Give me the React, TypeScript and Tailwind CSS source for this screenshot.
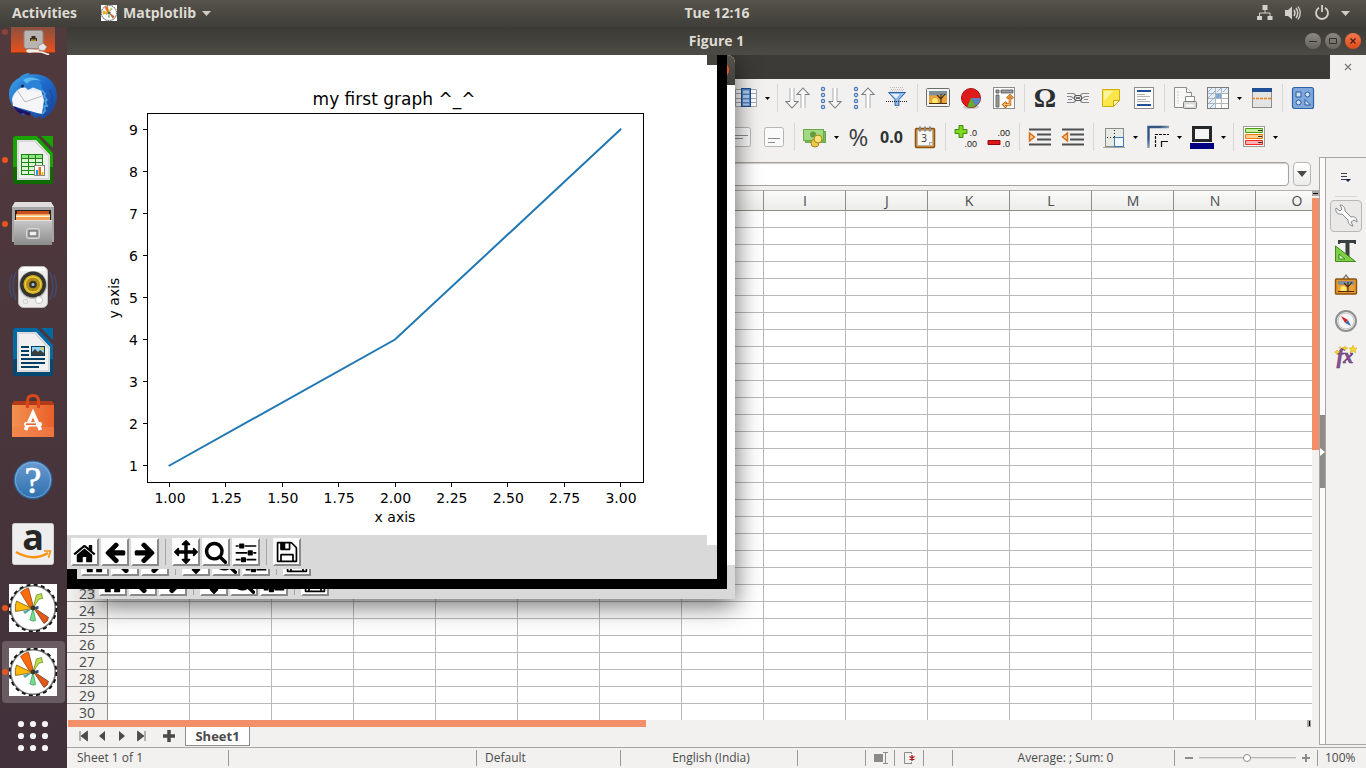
import type { ReactNode } from "react";

type IconProps = { w?: number; h?: number; children: ReactNode };

function Icon({ w = 24, h = 24, children }: IconProps) {
  return (
    <svg width={w} height={h} viewBox={`0 0 ${w} ${h}`} fill="none" aria-hidden="true" className="shrink-0 overflow-visible">
      {children}
    </svg>
  );
}

/* ---------- Dock icons ---------- */

function MatplotlibLogo({ size = 48 }: { size?: number }) {
  return (
    <svg width={size} height={size} viewBox="0 0 48 48" fill="none" aria-hidden="true">
      <rect width="48" height="48" fill="#fff" />
      <circle cx="24" cy="24" r="22.3" stroke="#777" strokeWidth="1.6" />
      <circle cx="24" cy="24" r="23.4" stroke="#111" strokeWidth="1.8" strokeDasharray="4 3.350" />
      <path d="M25 25 21 24 11.500 8.500Q15 5 19.500 4Z" fill="#ff6a0a" stroke="#8a4a1a" strokeWidth=".8" />
      <path d="M24 24 27.500 11 32.500 9.500 33.500 14.500 30 15Z" fill="#bfe04a" stroke="#6c8a2a" strokeWidth=".8" />
      <path d="M24 25 7.500 17Q5.500 22 6.500 27.500L21 25Z" fill="#ffb90a" stroke="#8a6a1a" strokeWidth=".9" />
      <path d="M24 24 14 27.500 16 30Z" fill="#4aa8a0" />
      <path d="M24 24 21 36Q24 38 26.500 36.500Z" fill="#6fe08c" stroke="#4a9a6a" strokeWidth=".8" />
      <path d="M24 23 39.500 33.500Q39 37.500 35 39.500Z" fill="#e0581a" stroke="#7a3a1a" strokeWidth=".8" />
      <path d="M22 23.500 29.500 22 29.500 25 22 25Z" fill="#2c4a8c" />
      <circle cx="24" cy="24" r="2.400" fill="#3a3a2a" />
    </svg>
  );
}

function DiskIcon() {
  return (
    <Icon w={48} h={28}>
      <defs>
        <linearGradient id="dk" x1="0" y1="0" x2="0" y2="1">
          <stop offset="0" stopColor="#8a5040" />
          <stop offset="1" stopColor="#e8501c" />
        </linearGradient>
      </defs>
      <path d="M2 0h44v25H2z" fill="url(#dk)" />
      <path d="M2 25h44v1H2z" fill="#a83a12" />
      <rect x="15" y="3.500" width="19" height="18" rx="2" fill="#b9b3b1" stroke="#8d8583" />
      <path d="M21 13v-2h1.500V9h4v2H28v3h-7z" fill="#332c28" />
      <path d="M22 12.500h5v1.300h-5z" fill="#c8a020" />
      <path d="M29 19l5-3 4 4-3 4-5-1z" fill="#e5e3e1" stroke="#8d8583" strokeWidth=".8" />
      <path d="M30 23c-6 1-12-1-12 1s10 0 14 1 6 3 8 2" stroke="#f1efed" strokeWidth="1.600" />
    </Icon>
  );
}

function ThunderbirdIcon() {
  return (
    <Icon w={48} h={48}>
      <defs>
        <linearGradient id="tb" x1="0" y1="0" x2="1" y2="1">
          <stop offset="0" stopColor="#3fa9ea" />
          <stop offset=".5" stopColor="#1d68c8" />
          <stop offset="1" stopColor="#1c3f8f" />
        </linearGradient>
      </defs>
      <path d="M10 6Q15 1 21 1l-1 1.500C38 0 48 11 48 24c0 10-6 18-13 22l-4 1 1-3-6 2-4-4-8-3 2 5C6 40 0 32 0 22 0 14 4 9 10 6z" fill="url(#tb)" />
      <path d="M3 28l5 8 14 5-2 3-6-3-2 1C7 40 3 34 3 28z" fill="#221260" />
      <path d="M3 28c0-5 5-10 10-13l19 3 3 10-2 14-5-1L4 34z" fill="#f6f6f8" />
      <path d="M8 18l8 12 17-6" stroke="#b9b9bd" strokeWidth="1" />
      <path d="M8 17c1-9 11-12 19-9 5 2 7 6 6 11l-8-2-6 1-3-3z" fill="#2a83d8" />
      <path d="M14 8c5-4 13-3 18 1-6-2-12-1-14 3z" fill="#5cb8ee" />
      <path d="M19 18l5-2.500 8 3-3 1.500z" fill="#e7eef8" />
      <circle cx="13.500" cy="14" r="1.500" fill="#12204a" />
      <path d="M33 18l3 4-1 2 3 4-2 1 2 5-3 0 1 5-3 3" stroke="#4aa0e0" strokeWidth="1.800" />
      <path d="M41 18l3 8-2 2 2 4-4 5" stroke="#1a4ea4" strokeWidth="1.800" />
    </Icon>
  );
}

function DocShape({ main, dark, children }: { main: string; dark: string; children: ReactNode }) {
  return (
    <Icon w={40} h={48}>
      <path d="M3 0h21l16 17v29a2 2 0 0 1-2 2H3a3 3 0 0 1-3-3V3a3 3 0 0 1 3-3z" fill={dark} />
      <path d="M3 0h21l16 17v14H0V3a3 3 0 0 1 3-3z" fill={main} />
      <path d="M28 0h12v12z" fill={main} />
      <path d="M4 4h19l14 15v25H4z" fill="#fff" />
      <path d="M5 5h17l14 15v23H5z" fill="#f0f0f0" stroke="#cfcfcf" strokeWidth="1.500" />
      {children}
    </Icon>
  );
}

function CalcIcon() {
  return (
    <DocShape main="#18a303" dark="#106a02">
      <rect x="8" y="18" width="22" height="21" fill="#18860a" />
      <path d="M9 19h6v3H9zM16 19h6v3h-6zM23 19h6v3h-6z" fill="#92e08a" />
      <path d="M9 23h6v3H9zM16 23h6v3h-6zM23 23h6v3h-6zM9 27h6v3H9zM16 27h6v3h-6zM23 27h6v3h-6zM9 31h6v3H9zM16 31h6v3h-6zM9 35h6v3H9zM16 35h6v3h-6z" fill="#dcf7d8" />
      <rect x="21.500" y="29.500" width="10" height="10" fill="#fff" stroke="#888" />
      <path d="M23 34h2v5h-2z" fill="#1d99e8" />
      <path d="M25.500 31h2.500v8h-2.500z" fill="#e8681d" />
      <path d="M28.500 36h2v3h-2z" fill="#f0c000" />
    </DocShape>
  );
}

function WriterIcon() {
  return (
    <DocShape main="#0369a3" dark="#024a73">
      <path d="M8 18h8v2H8zM8 22h8v2H8zM8 26h8v2H8zM8 30h24v2H8zM8 34h24v2H8zM8 38h18v2H8z" fill="#023f63" />
      <rect x="18.500" y="18.500" width="13" height="9" fill="#8ed3f5" stroke="#023f63" />
      <path d="M19 27v-3l3-3 3 3 2-2 4 3v2z" fill="#3a3f3a" />
      <circle cx="29" cy="20.500" r="1.500" fill="#f2c32a" />
    </DocShape>
  );
}

function FilesIcon() {
  return (
    <Icon w={42} h={44}>
      <defs>
        <linearGradient id="fl" x1="0" y1="0" x2="0" y2="1">
          <stop offset="0" stopColor="#c9c9c9" />
          <stop offset="1" stopColor="#8b8b8b" />
        </linearGradient>
      </defs>
      <path d="M3 0h36l3 5v35H0V5z" fill="#a5a5a5" />
      <path d="M3 0h36l3 5H0z" fill="#dedede" />
      <path d="M3 8h36v11H3z" fill="#23211f" />
      <path d="M5 9h32v3H5z" fill="#c8501e" />
      <path d="M4 12h34v6H4z" fill="#f0a050" />
      <path d="M4 13.500h34v1.500H4z" fill="#fff0d8" />
      <path d="M2 18h38v25H2z" fill="url(#fl)" />
      <path d="M2 18h38v1H2z" fill="#e4e4e4" />
      <rect x="14.500" y="26.500" width="13" height="10" rx="2" fill="#b5b5b5" stroke="#d9d9d9" />
      <rect x="17" y="29" width="8" height="5" fill="#eee" stroke="#555" />
    </Icon>
  );
}

function RhythmboxIcon() {
  return (
    <Icon w={48} h={48}>
      <path d="M7 8q-6 14 0 28M3 11q-5 11 0 22M41 8q6 14 0 28M45 11q5 11 0 22" stroke="#3d5a8c" strokeWidth="1.400" opacity=".6" />
      <rect x="9.500" y="2.500" width="29" height="41" rx="5" fill="#ececea" stroke="#bdbdbb" />
      <path d="M13 3h22l2 4H11z" fill="#fff" />
      <circle cx="24" cy="21" r="14" fill="#b7b7b4" />
      <circle cx="24" cy="20.500" r="13" fill="#33342f" />
      <circle cx="24" cy="20.500" r="9.500" fill="#d9b21a" />
      <circle cx="24" cy="20.500" r="7.500" fill="#b08c10" stroke="#f0d860" />
      <circle cx="24" cy="20.500" r="3.800" fill="#33342f" />
      <circle cx="24" cy="20.500" r="1.500" fill="#a9c0d8" />
      <circle cx="30" cy="36" r="3.500" fill="#fff" stroke="#c0c0be" />
      <rect x="14.500" y="35.500" width="4" height="4" rx="1" stroke="#cfcfcd" />
    </Icon>
  );
}

function SoftwareIcon() {
  return (
    <Icon w={42} h={46}>
      <defs>
        <linearGradient id="sw" x1="0" y1="0" x2="1" y2="0">
          <stop offset="0" stopColor="#f29250" />
          <stop offset="1" stopColor="#ea5f2a" />
        </linearGradient>
      </defs>
      <path d="M2 8h38l2 3v6H0v-6z" fill="#b23c18" />
      <path d="M0 12h42v32H0z" fill="url(#sw)" />
      <path d="M0 34h42v10H0z" fill="#f4814c" opacity=".6" />
      <path d="M15.500 15V8q0-5.500 5.500-5.500T26.500 8v7" stroke="#d9481c" strokeWidth="3" />
      <path d="M13.500 37l7.500-17 7.500 17" stroke="#fff" strokeWidth="3.600" />
      <rect x="12" y="29" width="18" height="4.500" rx="2" fill="#fff" />
      <path d="M14 31.200h10" stroke="#e8642c" strokeWidth="1.600" />
    </Icon>
  );
}

function HelpIcon() {
  return (
    <Icon w={40} h={40}>
      <defs>
        <linearGradient id="hp" x1="0" y1="0" x2="0" y2="1">
          <stop offset="0" stopColor="#6a9bd2" />
          <stop offset="1" stopColor="#2d70ad" />
        </linearGradient>
      </defs>
      <circle cx="20" cy="20" r="19" fill="url(#hp)" stroke="#285f96" />
      <circle cx="20" cy="20" r="17.500" stroke="#8db4de" opacity=".7" />
      <text x="20" y="33" textAnchor="middle" fill="#fff" stroke="#fff" strokeWidth=".6" className="font-['Liberation_Serif',serif] text-[38px]">?</text>
    </Icon>
  );
}

function AmazonIcon() {
  return (
    <Icon w={42} h={42}>
      <rect x=".5" y=".5" width="41" height="41" rx="2" fill="#eeeeee" stroke="#cfcfcf" />
      <text x="21" y="27" textAnchor="middle" fill="#262626" className="font-['Open_Sans',sans-serif] text-[36px] leading-none font-bold">a</text>
      <path d="M4 29q17 10 32 1" stroke="#f79412" strokeWidth="2.500" />
      <path d="M32 28h6.500l-2 7" stroke="#f79412" strokeWidth="1.600" />
    </Icon>
  );
}

function AppsIcon() {
  const spots = [12, 24, 36];
  return (
    <Icon w={48} h={48}>
      {spots.map((y) => spots.map((x) => <circle key={`${x}-${y}`} cx={x} cy={y} r="3.100" fill="#f4f2f2" />))}
    </Icon>
  );
}

type DockItem = { name: string; icon: ReactNode; running?: boolean; active?: boolean };

const dockItems: DockItem[] = [
  { name: "Thunderbird Mail", icon: <ThunderbirdIcon /> },
  { name: "LibreOffice Calc", icon: <CalcIcon />, running: true },
  { name: "Files", icon: <FilesIcon />, running: true },
  { name: "Rhythmbox", icon: <RhythmboxIcon /> },
  { name: "LibreOffice Writer", icon: <WriterIcon /> },
  { name: "Ubuntu Software", icon: <SoftwareIcon /> },
  { name: "Help", icon: <HelpIcon /> },
  { name: "Amazon", icon: <AmazonIcon /> },
  { name: "Matplotlib", icon: <MatplotlibLogo />, running: true },
  { name: "Matplotlib Figure 1", icon: <MatplotlibLogo />, running: true, active: true },
];

function Dock() {
  return (
    <nav aria-label="Dock" className="flex w-[67px] shrink-0 flex-col overflow-hidden bg-linear-to-b from-[#513a3d] to-[#42313a]">
      <button aria-label="Disks" className="relative flex h-[37px] shrink-0 items-start justify-center pr-px">
        <span className="absolute left-[2px] top-[2px] size-[6px] rounded-full bg-[#8a4438]" />
        <DiskIcon />
      </button>
      {dockItems.map((item) => (
        <button key={item.name} aria-label={item.name} className="relative flex h-16 shrink-0 items-center justify-center pr-px">
          {item.active && <span className="absolute inset-x-[2px] inset-y-px rounded bg-white/20" />}
          {item.running && <span className="absolute left-[2px] top-[29px] size-[6px] rounded-full bg-[#e95420]" />}
          <span className="relative">{item.icon}</span>
        </button>
      ))}
      <button aria-label="Show Applications" className="flex h-16 shrink-0 items-center justify-center pr-px">
        <AppsIcon />
      </button>
    </nav>
  );
}

/* ---------- Top bar ---------- */

function TopBar() {
  return (
    <header className="flex h-[27px] shrink-0 items-center bg-linear-to-b from-[#55534b] to-[#3f3e39] pr-4 pb-px pl-3 text-sm font-bold text-[#dfdbd2]">
      <div className="flex flex-1 items-center">
        <button>Activities</button>
        <button className="ml-6 flex items-center gap-[6px]">
          <MatplotlibLogo size={16} />
          Matplotlib
          <Icon w={9} h={5}><path d="M0 0h9L4.500 5z" fill="#cfccc4" /></Icon>
        </button>
      </div>
      <button className="ml-[72px]">Tue 12:16</button>
      <div className="flex flex-1 items-center justify-end">
        <button aria-label="System menu" className="flex items-center gap-3">
          <Icon w={16} h={16}>
            <path d="M5.500 0h5v5h-5zM0 11h5v4H0zM10.500 11h5v4h-5z" fill="#d3d0c8" />
            <path d="M8 5v3M2.500 11V8h10.500v3" stroke="#d3d0c8" />
          </Icon>
          <Icon w={16} h={16}>
            <path d="M0 5h3l4-3.500v13L3 11H0z" fill="#d3d0c8" />
            <path d="M9 5q2 3 0 6" stroke="#d3d0c8" strokeWidth="1.500" />
            <path d="M11 3q3.500 5 0 10" stroke="#d3d0c8" strokeWidth="1.500" />
            <path d="M13 1.500q4.500 6.500 0 13" stroke="#d3d0c8" strokeWidth="1.300" />
          </Icon>
          <Icon w={16} h={16}>
            <path d="M6 2.800a6 6 0 1 0 6 0M9 0v7" stroke="#d3d0c8" strokeWidth="1.800" />
          </Icon>
          <Icon w={9} h={5}><path d="M0 0h9L4.500 5z" fill="#cfccc4" /></Icon>
        </button>
      </div>
    </header>
  );
}

function TitleBar() {
  return (
    <div className="grid h-7 shrink-0 grid-cols-[1fr_auto_1fr] items-center bg-linear-to-b from-[#3b3a35] to-[#4d4b45] text-sm font-bold text-[#dfdbd2]">
      <span />
      <h1>Figure 1</h1>
      <div className="flex justify-end gap-1 pr-[5px]">
        <button aria-label="Minimize" className="flex size-4 items-center justify-center rounded-full bg-linear-to-b from-[#8a8880] to-[#66645d]">
          <Icon w={16} h={16}><path d="M4 8.500h8" stroke="#33322d" /></Icon>
        </button>
        <button aria-label="Maximize" className="flex size-4 items-center justify-center rounded-full bg-linear-to-b from-[#8a8880] to-[#66645d]">
          <Icon w={16} h={16}><path d="M4.500 5.500h7v5h-7z" stroke="#33322d" /></Icon>
        </button>
        <button aria-label="Close" className="flex size-4 items-center justify-center rounded-full bg-linear-to-b from-[#f4764a] to-[#df4b1a]">
          <Icon w={16} h={16}><path d="M5.500 5.500l5 5M10.500 5.500l-5 5" stroke="#4a2010" strokeWidth="1.300" /></Icon>
        </button>
      </div>
    </div>
  );
}

/* ---------- Spreadsheet toolbars ---------- */

const Down = ({ x }: { x: number }) => (
  <g>
    <path d={`M${x} 2v17`} stroke="#fff" strokeWidth="3" />
    <path d={`M${x - 2} 2v14M${x + 2} 2v14`} stroke="#b3b5b6" strokeWidth="1.100" />
    <path d={`M${x - 2} 15.500h-4l6 6.500 6-6.500h-4`} stroke="#7b7e80" strokeWidth="1.100" fill="#f7f7f7" />
  </g>
);
const Up = ({ x }: { x: number }) => (
  <g>
    <path d={`M${x} 5v17`} stroke="#fff" strokeWidth="3" />
    <path d={`M${x - 2} 22V8M${x + 2} 22V8`} stroke="#b3b5b6" strokeWidth="1.100" />
    <path d={`M${x - 2} 8.500h-4l6-6.500 6 6.500h-4`} stroke="#7b7e80" strokeWidth="1.100" fill="#f7f7f7" />
  </g>
);
const Beads = () => (
  <>
    {[3, 9, 15, 21].map((y) => (
      <circle key={y} cx="4" cy={y} r="1.600" stroke="#4a78b8" strokeWidth="1.200" fill="#dfeaf8" />
    ))}
  </>
);

const columnIcon = (
  <Icon>
    <path d="M1.500 3.500h21v17h-21zM1 7.500h22M1 12.500h22M1 16.500h22" stroke="#a5a7a8" fill="#fff" />
    <rect x="7.500" y="2.500" width="9" height="18" fill="#4d80c4" stroke="#1f4f94" />
    <path d="M9 4.500h6v3H9zM9 9h6v3H9zM9 13.500h6v2.500H9zM9 17.500h6v2H9z" fill="#b5cfee" />
  </Icon>
);
const sortIcon = (
  <Icon w={26} h={24}>
    <Down x={7} />
    <Up x={18} />
  </Icon>
);
const sortAscIcon = (<Icon><Beads /><Down x={16} /></Icon>);
const sortDescIcon = (<Icon><Beads /><Up x={16} /></Icon>);
const filterIcon = (
  <Icon>
    <path d="M5 1.500h14M6 3.500h14M5 5h14" stroke="#bdbdbd" strokeDasharray="1 1" />
    <path d="M3.500 6.500h17L14 13.500v6h-4v-6z" fill="#8cb8ec" stroke="#2d64a8" />
    <path d="M6 8h9l-4 4.500z" fill="#e6f2fd" />
    <path d="M1 15.500h22" stroke="#222" strokeDasharray="1 1" />
    <path d="M12 19v4" stroke="#888" strokeDasharray="1 1" />
  </Icon>
);
const SunsetTree = ({ x, y, w, h }: { x: number; y: number; w: number; h: number }) => (
  <g>
    <rect x={x} y={y} width={w} height={h} fill="#eca23a" />
    <rect x={x} y={y} width={w} height={h / 3} fill="#7d8f98" />
    <circle cx={x + w / 3} cy={y + h - 3} r="3" fill="#ffe86a" />
    <path d={`M${x + w - 6} ${y + h}v-5l-4-4M${x + w - 6} ${y + h - 5}l4-5M${x + w - 6} ${y + h - 6}v-4`} stroke="#3c2a14" strokeWidth="1.100" />
    <path d={`M${x} ${y + h - 1}h${w}v1h-${w}z`} fill="#4a3010" />
  </g>
);
const imageIcon = (
  <Icon>
    <rect x=".5" y="2.500" width="23" height="18" rx="1" fill="#f4f4f2" stroke="#6b6d6a" />
    <SunsetTree x={3} y={5} w={18} h={13} />
  </Icon>
);
const pieIcon = (
  <Icon>
    <ellipse cx="12" cy="21" rx="8" ry="2" fill="#c8c8c6" />
    <circle cx="12" cy="12" r="9.500" fill="#df1c1c" stroke="#a80d0d" />
    <path d="M12 12h9.500q-.5 6-5 8z" fill="#5585c4" />
    <path d="M12 12l4.500 8q-4 2.500-8 .5z" fill="#5fb02c" />
  </Icon>
);
const pivotIcon = (
  <Icon>
    <rect x="1.500" y="1.500" width="21" height="21" fill="#fff" stroke="#8c8e8b" />
    <path d="M4 4h3v3H4zM9 4h12v3H9zM4 9h3v12H4z" fill="#9a9c99" stroke="#55575a" strokeWidth=".8" />
    <path d="M12 18.500h6v-7M14.500 16l-3 2.500 3 3M15 12.500l3-3 3 3" stroke="#c4640c" strokeWidth="2.600" />
    <path d="M12 18.500h6v-7M14.500 16l-3 2.500 3 3M15 12.500l3-3 3 3" stroke="#ffc07c" strokeWidth="1" />
  </Icon>
);
const omegaIcon = (
  <Icon>
    <text x="12" y="21" textAnchor="middle" fill="#2b2f31" className="font-['Liberation_Serif',serif] text-[28px] font-bold">Ω</text>
  </Icon>
);
const chainIcon = (
  <Icon>
    <path d="M1 7.500h6q2 0 3 3M1 10.500h4l3 2M23 7.500h-6q-2 0-3 3M23 10.500h-4l-3 2M1 16.500h6q2 0 3-3M23 16.500h-6q-2 0-3-3M2 13.500h4M22 13.500h-4" stroke="#85878a" strokeWidth="1.200" />
    <rect x="8.500" y="9.500" width="7" height="5" rx="2" stroke="#5a5c5e" strokeWidth="1.200" />
    <path d="M10 12h4" stroke="#444" strokeWidth="1.500" />
  </Icon>
);
const noteIcon = (
  <Icon>
    <path d="M3.500 3.500h17v11l-6 6h-11z" fill="#fbe64a" stroke="#cfae10" />
    <path d="M5 5h9L5 15z" fill="#fdf4a0" />
    <path d="M14.500 20.500v-6h6z" fill="#fff6b8" stroke="#c8a808" />
  </Icon>
);
const headerFooterIcon = (
  <Icon>
    <rect x="2.500" y="1.500" width="19" height="21" fill="#fbfbfa" stroke="#8b8d8a" />
    <path d="M5 4h14v2H5zM5 18h14v2H5z" fill="#1f4f94" />
    <path d="M5 8.500h8M5 10.500h13M5 13.500h9M5 15.500h13" stroke="#b4b6b3" />
  </Icon>
);
const printAreaIcon = (
  <Icon>
    <path d="M1.500 1.500h12l5 5v15h-17z" fill="#f8f8f7" stroke="#8b8d8a" />
    <path d="M13.500 1.500v5h5" fill="#fff" stroke="#8b8d8a" />
    <path d="M5 5v13" stroke="#c9cbc8" strokeDasharray="2 1" />
    <path d="M12.500 15.500v-5h9v5" fill="#fff" stroke="#8b8d8a" />
    <rect x="10.500" y="15.500" width="13" height="7" rx="1" fill="#d9dad8" stroke="#7d7f7c" />
    <path d="M13 19.500h8" stroke="#fff" strokeWidth="2" />
  </Icon>
);
const freezeIcon = (
  <Icon>
    <rect x="1.500" y="1.500" width="21" height="21" fill="#fff" stroke="#7b7d7a" />
    <path d="M2 2h20v5H2zM2 7h7v15H2z" fill="#e6eff9" />
    <path d="M9.500 7.500h6v5h-6z" fill="#7ea8d8" />
    <path d="M2 7.500h20M2 12.500h20M2 17.500h20M9.500 2v20M15.500 2v20" stroke="#b4b6b3" />
    <path d="M2 6l4-4M2 12l7-7M2 18l7-7M4 22l5-5M11 6l4-4M17 6l4-4" stroke="#8fb2da" />
    <rect x="1.500" y="1.500" width="21" height="21" stroke="#7b7d7a" />
  </Icon>
);
const splitIcon = (
  <Icon>
    <rect x="2.500" y="2.500" width="19" height="19" fill="#e4e5e3" stroke="#8b8d8a" />
    <path d="M2 2h20v4H2z" fill="#1f4f94" />
    <path d="M2 12.500h20" stroke="#f08018" strokeWidth="1.500" strokeDasharray="3 1" />
  </Icon>
);
const shapesIcon = (
  <Icon>
    <rect x="1.500" y="1.500" width="21" height="21" rx="2" fill="#7fa8dc" stroke="#2f62a5" strokeWidth="1.200" />
    <path d="M5 6h5v5H5z" fill="#cfe0f5" stroke="#2a5a9c" />
    <circle cx="16.500" cy="8.500" r="2.500" fill="#cfe0f5" stroke="#2a5a9c" />
    <circle cx="7.500" cy="16.500" r="2.500" fill="#cfe0f5" stroke="#2a5a9c" />
    <path d="M14 13.500v5.500h5.500z" fill="#cfe0f5" stroke="#2a5a9c" />
  </Icon>
);

const AlignBox = ({ lines }: { lines: string }) => (
  <Icon>
    <rect x="2.500" y="2.500" width="19" height="19" rx="2" fill="#fafafa" stroke="#b5b7b4" />
    <path d={lines} stroke="#8b8d8a" />
  </Icon>
);
const moneyIcon = (
  <Icon w={26} h={24}>
    <rect x="3.500" y="6.500" width="20" height="11" fill="#7cbf50" stroke="#6aa84c" />
    <rect x="1.500" y="4.500" width="20" height="11" fill="#a5d882" stroke="#6aa84c" />
    <circle cx="11" cy="9.500" r="3" fill="#5f9c40" />
    <circle cx="13" cy="18" r="4" fill="#ecca50" stroke="#a98818" />
    <circle cx="16" cy="14" r="4" fill="#f8e078" stroke="#a98818" />
  </Icon>
);
const dateIcon = (
  <Icon>
    <rect x="2.500" y="3.500" width="19" height="19" rx="1" fill="#e8952c" stroke="#8a5410" strokeWidth="1.500" />
    <rect x="4.500" y="5.500" width="15" height="15" fill="#f7f7f6" stroke="#b5b5b0" />
    <path d="M7 1.500v5M12 1.500v5M17 1.500v5" stroke="#8a8a8a" strokeWidth="2" />
    <text x="11" y="17" textAnchor="middle" fill="#333" className="text-[10px]">3</text>
    <path d="M16.500 20.500v-3h3" fill="#ddd" stroke="#aaa" />
  </Icon>
);
const addDecimalIcon = (
  <Icon>
    <path d="M5 .5h4v4h4v4H9v4H5v-4H1v-4h4z" fill="#7fd820" stroke="#3f8a08" />
    <text x="23" y="11" textAnchor="end" fill="#222" className="font-['Liberation_Sans',sans-serif] text-[9px]">.0</text>
    <text x="23" y="22" textAnchor="end" fill="#222" className="font-['Liberation_Sans',sans-serif] text-[9px]">.00</text>
  </Icon>
);
const delDecimalIcon = (
  <Icon>
    <path d="M1 15.500h12v4H1z" fill="#e01818" stroke="#980808" />
    <text x="23" y="11" textAnchor="end" fill="#222" className="font-['Liberation_Sans',sans-serif] text-[9px]">.00</text>
    <text x="23" y="22" textAnchor="end" fill="#222" className="font-['Liberation_Sans',sans-serif] text-[9px]">.0</text>
  </Icon>
);
const IndentIcon = ({ flip }: { flip?: boolean }) => (
  <Icon>
    <path d="M1 4.500h22M9 9.500h14M9 14.500h14M1 19.500h22" stroke="#4d5052" strokeWidth="2.200" />
    <path d={flip ? "M6.500 8v8L1.500 12z" : "M1.500 8v8L6.500 12z"} fill="#f8c890" stroke="#d86c10" strokeWidth="1.400" />
  </Icon>
);
const bordersIcon = (
  <Icon>
    <rect x="3.500" y="3.500" width="18" height="18" fill="#e6ebe4" stroke="#8b8d8a" />
    <path d="M12.500 5v16M5 12.500h16" stroke="#222" strokeDasharray="1 2" />
    <rect x="12.500" y="12.500" width="9" height="9" fill="#f5f9fd" stroke="#3f78b8" />
    <path d="M1 22.500h22" stroke="#a5a7a4" />
  </Icon>
);
const borderStyleIcon = (
  <Icon>
    <defs>
      <linearGradient id="bs" gradientUnits="userSpaceOnUse" x1="8" y1="8" x2="18" y2="18">
        <stop offset="0" stopColor="#33557f" />
        <stop offset="1" stopColor="#33557f" stopOpacity="0" />
      </linearGradient>
    </defs>
    <path d="M2.500 23V2H23" stroke="url(#bs)" strokeWidth="2.400" />
    <path d="M9.500 22V9.500H23" stroke="#111" strokeWidth="1.200" strokeDasharray="3 1" />
    <path d="M15.500 22v-5.500H22" stroke="#111" strokeWidth="1.200" />
  </Icon>
);
const borderColorIcon = (
  <Icon>
    <rect x="3.500" y="2.500" width="17" height="13" fill="#f4f4f4" stroke="#25282a" strokeWidth="3" />
    <path d="M0 18h24v6H0z" fill="#000080" />
  </Icon>
);
const conditionalIcon = (
  <Icon>
    <rect x="1.500" y="1.500" width="21" height="20" fill="#fff" stroke="#9a9c99" />
    <path d="M3.500 3.500h17v4h-17z" fill="#c8f09c" stroke="#4b9c10" />
    <path d="M3.500 9.500h17v4h-17z" fill="#ffd094" stroke="#f07800" />
    <path d="M3.500 15.500h17v4h-17z" fill="#ffb0b0" stroke="#ef2828" />
    <path d="M16 5.500h4M16 11.500h4M16 17.500h4" stroke="#333" />
  </Icon>
);

type Tool = { kind: "tool"; name: string; icon: ReactNode } | { kind: "menu"; name: string } | { kind: "sep" };
const tool = (name: string, icon: ReactNode): Tool => ({ kind: "tool", name, icon });
const menu = (name: string): Tool => ({ kind: "menu", name });
const sep: Tool = { kind: "sep" };

const standardTools: Tool[] = [
  tool("Column", columnIcon), menu("Column options"), sep,
  tool("Sort", sortIcon), tool("Sort ascending", sortAscIcon), tool("Sort descending", sortDescIcon), tool("AutoFilter", filterIcon), sep,
  tool("Insert image", imageIcon), tool("Insert chart", pieIcon), tool("Pivot table", pivotIcon), sep,
  tool("Special character", omegaIcon), tool("Hyperlink", chainIcon), tool("Comment", noteIcon), tool("Headers and footers", headerFooterIcon), sep,
  tool("Define print area", printAreaIcon), tool("Freeze panes", freezeIcon), menu("Freeze options"), tool("Split window", splitIcon), sep,
  tool("Draw functions", shapesIcon),
];

const formattingTools: Tool[] = [
  tool("Center vertically", <AlignBox lines="M5 10.500h14M5 13.500h9" />), tool("Align bottom", <AlignBox lines="M6 13.500h12M6 17.500h7" />), sep,
  tool("Currency", moneyIcon), menu("Currency options"),
  tool("Percent", <span className="text-[24px] leading-6 text-[#3a3d3f]">%</span>),
  tool("Number", <span className="text-base leading-6 font-bold text-[#2f3234]">0.0</span>),
  tool("Date", dateIcon), sep,
  tool("Add decimal place", addDecimalIcon), tool("Delete decimal place", delDecimalIcon), sep,
  tool("Increase indent", <IndentIcon />), tool("Decrease indent", <IndentIcon flip />), sep,
  tool("Borders", bordersIcon), menu("Border options"), tool("Border style", borderStyleIcon), menu("Border style options"),
  tool("Border color", borderColorIcon), menu("Border color options"), sep,
  tool("Conditional formatting", conditionalIcon), menu("Conditional options"),
];

function Toolbar({ label, tools }: { label: string; tools: Tool[] }) {
  return (
    <div role="toolbar" aria-label={label} className="flex h-[38px] items-center">
      {tools.map((t, i) => {
        if (t.kind === "sep") {
          return <span key={i} className="flex w-2 shrink-0 justify-center"><span className="h-7 w-px bg-[#d8d6d3]" /></span>;
        }
        if (t.kind === "menu") {
          return (
            <button key={i} aria-label={t.name} className="flex h-8 w-[11px] shrink-0 items-center justify-center">
              <Icon w={5} h={3}><path d="M0 0h5L2.500 3z" fill="#000" /></Icon>
            </button>
          );
        }
        return (
          <button key={i} aria-label={t.name} className="flex h-8 w-[33px] shrink-0 items-center justify-center">
            {t.icon}
          </button>
        );
      })}
    </div>
  );
}

/* ---------- Sheet ---------- */

const columns = "ABCDEFGHIJKLMNO".split("");
const rows = Array.from({ length: 30 }, (_, i) => i + 1);

function Sheet() {
  return (
    <div className="min-w-0 flex-1 overflow-hidden bg-white">
      <table className="w-[1271px] table-fixed border-separate border-spacing-0 text-sm text-[#4a4a4a]">
        <thead>
          <tr>
            <th className="h-[21px] w-[41px] border-y border-r border-[#8f8d8a] bg-[#f2f1ef] p-0" />
            {columns.map((c) => (
              <th key={c} className="h-[21px] border-y border-r border-[#8f8d8a] border-t-[#b3b1ae] bg-linear-to-b from-[#fafafa] to-[#ececea] p-0 pl-px leading-[19px] font-normal">{c}</th>
            ))}
          </tr>
        </thead>
        <tbody>
          {rows.map((r) => (
            <tr key={r}>
              <th className="h-[17px] border-r border-b border-[#8f8d8a] bg-[#f2f1ef] p-0 pt-[2px] leading-[14px] font-normal">{r}</th>
              {columns.map((c) => (
                <td key={c} className="h-[17px] border-r border-b border-[#b9b9b9] p-0" />
              ))}
            </tr>
          ))}
        </tbody>
      </table>
    </div>
  );
}

function SheetTabs() {
  return (
    <div className="flex h-5 shrink-0 items-start text-[#4a4a4a]">
      <div className="flex items-center gap-[11px] pt-[3px] pl-3">
        <button aria-label="First sheet"><Icon w={9} h={10}><path d="M1 0v10M8.500 0v10L2 5z" stroke="#4a4a4a" strokeWidth=".8" fill="#4a4a4a" /></Icon></button>
        <button aria-label="Previous sheet"><Icon w={8} h={10}><path d="M6 0v10L0 5z" fill="#4a4a4a" /></Icon></button>
        <button aria-label="Next sheet"><Icon w={8} h={10}><path d="M1 0v10l6-5z" fill="#4a4a4a" /></Icon></button>
        <button aria-label="Last sheet"><Icon w={9} h={10}><path d="M8 0v10M.5 0v10L7 5z" stroke="#4a4a4a" strokeWidth=".8" fill="#4a4a4a" /></Icon></button>
        <button aria-label="Add sheet" className="ml-[6px]"><Icon w={12} h={12}><path d="M6 0v12M0 6h12" stroke="#4a4a4a" strokeWidth="3.500" /></Icon></button>
      </div>
      <button className="ml-[10px] h-[19px] w-[65px] border border-t-0 border-[#8f8d8a] bg-white text-[13px] leading-[18px] font-bold">Sheet1</button>
    </div>
  );
}

const Bar = () => <span className="h-4 w-px shrink-0 bg-[#9b9996]" />;

function StatusBar() {
  return (
    <footer className="flex h-[21px] shrink-0 items-center border-t border-[#a9a7a4] text-xs text-[#4a4a4a]">
      <span className="w-[161px] pl-[10px]">Sheet 1 of 1</span>
      <Bar />
      <span className="w-[247px]" />
      <Bar />
      <span className="w-[143px] pl-2">Default</span>
      <Bar />
      <span className="w-[176px] pl-1 text-center">English (India)</span>
      <Bar />
      <span className="w-[67px]" />
      <Bar />
      <button aria-label="Selection mode" className="flex w-7 justify-center pl-[2px]">
        <Icon w={14} h={12}><path d="M0 2h9v8H0z" fill="#8c8a87" /><path d="M9 .5h5M11.500 .5v11M9 11.500h5" stroke="#8c8a87" /></Icon>
      </button>
      <Bar />
      <button aria-label="Document modified" className="flex w-7 justify-center pl-[2px]">
        <Icon w={14} h={12}>
          <path d="M8 .5H1.500v11H8M8.500 0v2M8.500 10v2" stroke="#8c8a87" />
          <path d="M9 3v6M6.500 4.500l5 3M11.500 4.500l-5 3" stroke="#b01818" strokeWidth="1.300" />
        </Icon>
      </button>
      <Bar />
      <span className="w-7" />
      <Bar />
      <span className="flex-1 pl-1 text-center">Average: ; Sum: 0</span>
      <Bar />
      <span className="flex w-[142px] items-center justify-center gap-[6px] pl-[2px]">
        <button aria-label="Zoom out"><Icon w={8} h={8}><path d="M0 4h8" stroke="#8c8a87" strokeWidth="2" /></Icon></button>
        <input
          type="range"
          aria-label="Zoom"
          defaultValue={50}
          className="h-3 w-[97px] appearance-none bg-linear-to-b from-transparent from-[5px] via-[#a9a7a4] via-[5px] to-transparent to-[7px] [&::-webkit-slider-thumb]:size-2 [&::-webkit-slider-thumb]:appearance-none [&::-webkit-slider-thumb]:rounded-full [&::-webkit-slider-thumb]:border [&::-webkit-slider-thumb]:border-solid [&::-webkit-slider-thumb]:border-[#8c8a87] [&::-webkit-slider-thumb]:bg-white"
        />
        <button aria-label="Zoom in"><Icon w={8} h={8}><path d="M0 4h8M4 0v8" stroke="#8c8a87" strokeWidth="2" /></Icon></button>
      </span>
      <Bar />
      <span className="w-12 pl-[7px]">100%</span>
    </footer>
  );
}

/* ---------- Sidebar ---------- */

const sidebarTools: { name: string; icon: ReactNode }[] = [
  {
    name: "Properties",
    icon: (
      <Icon>
        <path d="M2 4l4 3 2-2-2-4c3 0 5 2 5 6l6 6c4-1 6 1 6 5l-3-2-3 2 2 4c-3 0-5-3-5-6L8 10C4 11 1 8 2 4z" fill="#fdfdfd" stroke="#85878a" />
      </Icon>
    ),
  },
  {
    name: "Styles",
    icon: (
      <Icon>
        <path d="M4 1h18v4h-1.500L19.500 4H15.500v16h-4V4H6.500L5.500 5H4z" fill="#3a3e40" />
        <path d="M1.500 7v15.500h20z" fill="#7ed048" stroke="#3f8a18" />
        <path d="M5 15v5h6z" fill="#d8f4c4" stroke="#3f8a18" />
      </Icon>
    ),
  },
  {
    name: "Gallery",
    icon: (
      <Icon>
        <path d="M9 5l3-4 3 4" stroke="#777" strokeWidth="1.300" />
        <rect x="1.500" y="5" width="21" height="15" rx="1" fill="#e8952c" stroke="#8a5410" strokeWidth="1.400" />
        <SunsetTree x={4} y={7} w={16} h={11} />
      </Icon>
    ),
  },
  {
    name: "Navigator",
    icon: (
      <Icon>
        <circle cx="12" cy="12" r="10" fill="#f4f5f5" stroke="#8e9090" strokeWidth="2" />
        <circle cx="12" cy="12" r="8" stroke="#c4c6c6" />
        <path d="M7 7l7 4-3 3z" fill="#df2020" />
        <path d="M17 17l-6-3 3-3z" fill="#3f6fb0" />
      </Icon>
    ),
  },
  {
    name: "Functions",
    icon: (
      <Icon>
        <text x="11" y="19" textAnchor="middle" fill="#8a5596" stroke="#5a2f68" strokeWidth=".6" className="font-['Liberation_Serif',serif] text-[20px] font-bold italic">fx</text>
        <path d="M19 1l1 3 3 0-2 2 1 3-3-2-3 2 1-3-2-2h3zM11 2l1 1.500 2 .5-2 1-1 1.500-1-1.500-2-1 2-.5zM3 6l1 1.500 1.500.5L4 9l-1 1.500L2 9 .5 8 2 7.500zM6 2.500l1 1-1 1-1-1z" fill="#f6d428" stroke="#d0a810" strokeWidth=".5" />
      </Icon>
    ),
  },
];

function Sidebar() {
  return (
    <aside aria-label="Sidebar" className="mb-[2px] flex w-[47px] shrink-0 border border-r-0 border-[#a9a7a4]">
      <div className="flex w-[5px] shrink-0 flex-col bg-[#fafafa]">
        <button aria-label="Hide sidebar" className="mt-[257px] flex h-[73px] w-[5px] items-center bg-[#8f8c87]">
          <Icon w={5} h={8}><path d="M0 0v8l5-4z" fill="#fff" /></Icon>
        </button>
      </div>
      <div className="flex flex-1 flex-col items-center border-l border-[#a9a7a4]">
        <button aria-label="Sidebar settings" className="mt-[14px] flex h-3">
          <Icon w={10} h={11}>
            <path d="M0 1.500h6M0 4.500h6M0 7.500h6" stroke="#3a3f55" />
            <path d="M4 7h6L7 10z" fill="#1d2540" />
          </Icon>
        </button>
        <span className="mt-3 h-px w-[22px] bg-[#d8d6d3]" />
        <div className="mt-[3px] flex flex-col gap-[3px]">
          {sidebarTools.map((t, i) => (
            <button
              key={t.name}
              aria-label={t.name}
              className={i === 0 ? "flex size-8 items-center justify-center rounded border border-[#b9b7b4] bg-[#eae9e7]" : "flex size-8 items-center justify-center"}
            >
              {t.icon}
            </button>
          ))}
        </div>
      </div>
    </aside>
  );
}

function CalcWindow() {
  return (
    <main className="flex min-h-0 flex-1 flex-col bg-[#f2f1ef]">
      <div className="flex h-6 shrink-0 justify-end bg-[#3c3b37]">
        <button aria-label="Close document" className="flex w-9 items-center justify-center bg-[#f2f1ef]">
          <Icon w={6} h={6}><path d="M0 0l6 6M6 0L0 6" stroke="#777" strokeWidth="1.200" /></Icon>
        </button>
      </div>
      <div className="flex shrink-0 flex-col gap-px overflow-hidden pb-px">
        <div className="pl-[662px]"><Toolbar label="Standard" tools={standardTools} /></div>
        <div className="pl-[657px]"><Toolbar label="Formatting" tools={formattingTools} /></div>
      </div>
      <div className="flex min-h-0 flex-1">
        <div className="flex min-w-0 flex-1 flex-col">
          <div className="flex h-[33px] shrink-0 items-center gap-1 pr-2 pl-2">
            <input aria-label="Formula" className="h-6 min-w-0 flex-1 rounded border border-[#a5a3a0] bg-white px-2 text-sm shadow-[inset_0_1px_1px_#cfcdca]" />
            <button aria-label="Expand formula bar" className="flex h-6 w-[18px] items-center justify-center rounded border border-[#b9b7b4] bg-linear-to-b from-white to-[#ececea]">
              <Icon w={10} h={6}><path d="M0 0h10L5 6z" fill="#4a4a4a" /></Icon>
            </button>
          </div>
          <div className="flex min-h-0 flex-1">
            <Sheet />
            <div className="flex w-[7px] shrink-0 flex-col border-t border-[#b3b1ae]">
              <span className="flex h-[5px] items-center justify-center bg-[#a9a7a4]"><span className="h-px w-[5px] bg-black" /></span>
              <span className="mt-[2px] h-[252px] bg-[#f28f68]" />
            </div>
          </div>
          <div className="flex h-[7px] shrink-0 justify-between pr-2 pl-px">
            <span className="w-[578px] bg-[#f28f68]" />
            <span className="flex w-1 justify-center bg-[#a9a7a4] py-px"><span className="w-px bg-black" /></span>
          </div>
          <SheetTabs />
        </div>
        <Sidebar />
      </div>
      <StatusBar />
    </main>
  );
}

/* ---------- Matplotlib figures ---------- */

const glyphs: Record<string, string> = {
  Home: "M1472 992v480q0 26-19 45t-45 19h-384v-384h-256v384h-384q-26 0-45-19t-19-45v-480q0-1 .5-3t.5-3l575-474 575 474q1 2 1 6zm223-69l-62 74q-8 9-21 11h-3q-13 0-21-7l-692-577-692 577q-12 8-24 7-13-2-21-11l-62-74q-8-10-7-23.500t11-21.500l719-599q32-26 76-26t76 26l244 204v-195q0-14 9-23t23-9h192q14 0 23 9t9 23v408l219 182q10 8 11 21.500t-7 23.500z",
  Back: "M1664 896v128q0 53-32.500 90.500t-84.500 37.500h-704l293 294q38 36 38 90t-38 90l-75 76q-37 37-90 37-52 0-91-37l-651-652q-37-37-37-90 0-52 37-91l651-650q38-38 91-38 52 0 90 38l75 74q38 38 38 91t-38 91l-293 293h704q52 0 84.500 37.500t32.500 90.500z",
  Pan: "M1792 896q0 26-19 45l-256 256q-19 19-45 19t-45-19-19-45v-128h-384v384h128q26 0 45 19t19 45-19 45l-256 256q-19 19-45 19t-45-19l-256-256q-19-19-19-45t19-45 45-19h128v-384h-384v128q0 26-19 45t-45 19-45-19l-256-256q-19-19-19-45t19-45l256-256q19-19 45-19t45 19 19 45v128h384v-384h-128q-26 0-45-19t-19-45 19-45l256-256q19-19 45-19t45 19l256 256q19 19 19 45t-19 45-45 19h-128v384h384v-128q0-26 19-45t45-19 45 19l256 256q19 19 19 45z",
  Zoom: "M1216 832q0-185-131.500-316.500t-316.500-131.500-316.500 131.500-131.500 316.500 131.500 316.500 316.500 131.500 316.500-131.500 131.500-316.500zm512 832q0 52-38 90t-90 38q-54 0-90-38l-343-342q-179 124-399 124-143 0-273.500-55.500t-225-150-150-225-55.500-273.500 55.500-273.500 150-225 225-150 273.500-55.500 273.500 55.500 225 150 150 225 55.500 273.500q0 220-124 399l343 343q37 37 37 90z",
  Subplots: "M480 1408v128h-352v-128h352zm352-128q26 0 45 19t19 45v256q0 26-19 45t-45 19h-256q-26 0-45-19t-19-45v-256q0-26 19-45t45-19h256zm160-384v128h-864v-128h864zm-640-512v128h-224v-128h224zm1312 1024v128h-736v-128h736zm-960-1152q26 0 45 19t19 45v256q0 26-19 45t-45 19h-256q-26 0-45-19t-19-45v-256q0-26 19-45t45-19h256zm640 512q26 0 45 19t19 45v256q0 26-19 45t-45 19h-256q-26 0-45-19t-19-45v-256q0-26 19-45t45-19h256zm320 128v128h-224v-128h224zm0-512v128h-864v-128h864z",
  Save: "M512 1536h768v-384h-768v384zm896 0h128v-896q0-14-10-38.500t-20-34.500l-281-281q-10-10-34-20t-39-10v416q0 40-28 68t-68 28h-576q-40 0-68-28t-28-68v-416h-128v1280h128v-416q0-40 28-68t68-28h832q40 0 68 28t28 68v416zm-384-928v-320q0-13-9.500-22.500t-22.500-9.500h-192q-13 0-22.500 9.500t-9.500 22.500v320q0 13 9.500 22.500t22.500 9.500h192q13 0 22.500-9.500t9.500-22.500zm640 32v928q0 40-28 68t-68 28h-1344q-40 0-68-28t-28-68v-1344q0-40 28-68t68-28h928q40 0 88 20t76 48l280 280q28 28 48 76t20 88z",
};

const glyphShift: Record<string, string> = {
  Forward: "matrix(-1 0 0 1 1792 0)",
  Home: "translate(-40 120)",
};

const figureGroups = [["Home", "Back", "Forward"], ["Pan", "Zoom", "Subplots"], ["Save"]];

function FigureToolbar() {
  return (
    <div role="toolbar" aria-label="Figure" className="flex h-[34px] shrink-0 items-center gap-[6px] bg-[#d9d9d9] pl-1">
      {figureGroups.map((group, g) => (
        <div key={g} className="flex items-center gap-[6px]">
          {g > 0 && <span className="h-[26px] w-px bg-[#a5a5a5]" />}
          <div className="flex gap-[2px]">
            {group.map((name) => (
              <button key={name} aria-label={name} className="flex size-7 items-center justify-center border-2 border-t-[#fbfbfb] border-r-[#8a8a8a] border-b-[#8a8a8a] border-l-[#fbfbfb] bg-white">
                <svg viewBox="0 0 1792 1792" className="size-6 shrink-0" aria-hidden="true">
                  <path d={name === "Forward" ? glyphs.Back : glyphs[name]} transform={glyphShift[name]} />
                </svg>
              </button>
            ))}
          </div>
        </div>
      ))}
    </div>
  );
}

const xTicks = ["1.00", "1.25", "1.50", "1.75", "2.00", "2.25", "2.50", "2.75", "3.00"];
const yTicks = [1, 2, 3, 4, 5, 6, 7, 8, 9];
const xAt = (v: number) => 102.5 + (v - 1) * 225.5;
const yAt = (v: number) => 410.5 - (v - 1) * 42;

function Plot() {
  return (
    <svg viewBox="0 0 640 480" className="block h-[480px] w-full bg-white font-['DejaVu_Sans',sans-serif]" role="img" aria-label="my first graph">
      <text x="327" y="50" textAnchor="middle" className="text-[17px]">my first graph ^_^</text>
      <rect x="80.5" y="58.5" width="496" height="369" fill="none" stroke="#000" />
      {xTicks.map((t) => (
        <g key={t}>
          <path d={`M${Math.floor(xAt(Number(t))) + 0.5} 428v4`} stroke="#000" />
          <text x={xAt(Number(t)) + 0.5} y="448" textAnchor="middle" className="text-[14px]">{t}</text>
        </g>
      ))}
      {yTicks.map((t) => (
        <g key={t}>
          <path d={`M76 ${yAt(t)}h4`} stroke="#000" />
          <text x="71" y={yAt(t) + 5} textAnchor="end" className="text-[14px]">{t}</text>
        </g>
      ))}
      <text x="328" y="467" textAnchor="middle" className="text-[14px]">x axis</text>
      <text transform="translate(52 243) rotate(-90)" textAnchor="middle" className="text-[14px]">y axis</text>
      <path d={`M${xAt(1)} ${yAt(1)}L${xAt(2)} ${yAt(4)}L${xAt(3)} ${yAt(9)}`} fill="none" stroke="#1f77b4" strokeWidth="2" strokeLinecap="square" />
    </svg>
  );
}

function FigureWindows() {
  return (
    <>
      <section aria-label="Figure, back" className="absolute top-0 left-7 flex h-[544px] w-[640px] flex-col rounded-tr-lg bg-white shadow-[0_6px_26px_rgba(0,0,0,0.6)]">
        <div className="flex h-[30px] shrink-0 items-center justify-end overflow-hidden rounded-tr-lg bg-linear-to-b from-[#55534b] to-[#403f3a] pr-[6px]">
          <span className="size-4 rounded-full bg-[#ea5a28]" />
        </div>
        <div className="flex-1" />
        <FigureToolbar />
      </section>
      <div className="absolute top-0 left-0 h-[534px] w-[660px] bg-black" />
      <section aria-label="Figure, middle" className="absolute top-0 left-[10px] flex h-[524px] w-[640px] flex-col bg-white">
        <div className="h-[10px] shrink-0 bg-[#45443f]" />
        <div className="flex-1" />
        <FigureToolbar />
      </section>
      <section aria-label="Figure 1" className="absolute top-0 left-0 flex w-[640px] flex-col">
        <Plot />
        <FigureToolbar />
      </section>
    </>
  );
}

export default function App() {
  return (
    <div className="flex h-screen w-full flex-col overflow-hidden bg-[#43323a] font-['Open_Sans','Noto_Sans',sans-serif]">
      <TopBar />
      <div className="flex min-h-0 flex-1">
        <Dock />
        <div className="flex min-w-0 flex-1 flex-col">
          <TitleBar />
          <div className="relative flex min-h-0 flex-1 flex-col overflow-hidden">
            <CalcWindow />
            <FigureWindows />
          </div>
        </div>
      </div>
    </div>
  );
}
